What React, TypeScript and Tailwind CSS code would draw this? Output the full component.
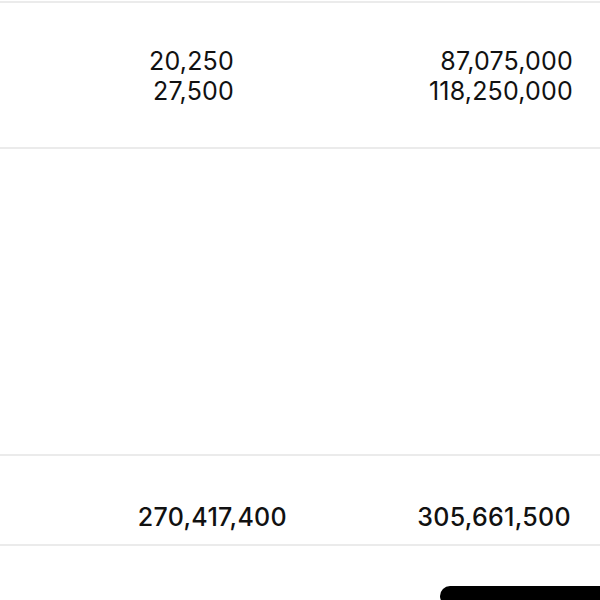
export default function App() {
  return (
    <div
      className="w-[600px] h-[600px] overflow-hidden bg-white text-[#111] flex flex-col"
      style={{ fontFamily: 'Inter, "Liberation Sans", sans-serif' }}
    >
      {/* items */}
      <div className="mt-[1px] h-[148px] shrink-0 border-y-2 border-[#ebebeb] flex items-start pt-[43px]">
        <div className="grid grid-cols-[234px_339px] text-[25px] leading-[30px] tracking-[0.2px] text-right">
          <div>
            <div>20,250</div>
            <div>27,500</div>
          </div>
          <div>
            <div>87,075,000</div>
            <div>118,250,000</div>
          </div>
        </div>
      </div>

      <div className="h-[305px] shrink-0" />

      {/* totals */}
      <div className="h-[92px] shrink-0 border-y-2 border-[#ebebeb] flex items-start pt-[46px]">
        <div className="grid grid-cols-[287px_284px] text-[25px] leading-[30px] tracking-[0.3px] font-medium text-right">
          <div>270,417,400</div>
          <div>305,661,500</div>
        </div>
      </div>

      <div className="flex-1 flex justify-end items-start pt-[40px]">
        <div className="w-[160px] h-[20px] shrink-0 bg-black rounded-l-full" />
      </div>
    </div>
  );
}
